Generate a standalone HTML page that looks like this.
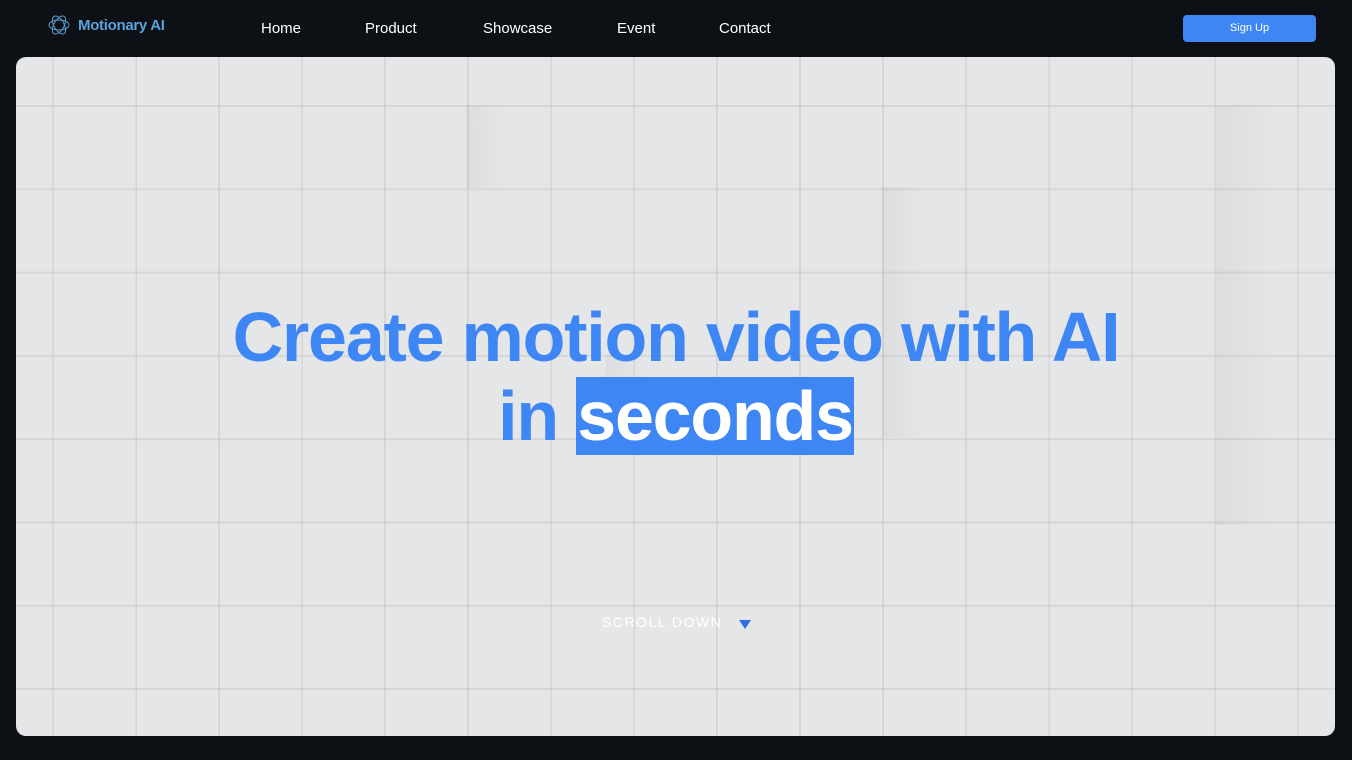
<!DOCTYPE html>
<html><head><meta charset="utf-8"><style>
*{margin:0;padding:0;box-sizing:border-box}
body{width:1352px;height:760px;background:#0d1015;font-family:"Liberation Sans",sans-serif;overflow:hidden;position:relative}
.logo{position:absolute;left:47px;top:13px;display:flex;align-items:center;gap:7px;color:#5aa3dc;font-weight:bold;font-size:15px}
nav a{position:absolute;top:20px;color:#fff;font-size:15px;text-decoration:none}
.btn{position:absolute;left:1183px;top:15px;width:133px;height:27px;background:#3f86f5;border-radius:4px;color:#fff;font-size:11px;text-align:center;line-height:27px}
.hero{position:absolute;left:16px;top:57px;width:1319px;height:679px;border-radius:10px;overflow:hidden;background:#e5e6e8;
background-image:
linear-gradient(90deg,rgba(160,160,165,.22) 2px,transparent 2px),
linear-gradient(180deg,rgba(160,160,165,.22) 2px,transparent 2px);
background-size:83px 83.3px;background-position:36px 48px}
.sh{position:absolute;background:linear-gradient(90deg,rgba(0,0,0,.04),transparent)}
h1{position:absolute;left:0;width:100%;text-align:center;color:#3f86f5;font-size:70px;font-weight:bold;letter-spacing:-1.2px;line-height:80px}
.hl{background:#3f86f5;color:#fff;padding:0 1px}
.sc{position:absolute;left:602px;top:614px;color:#fff;font-size:14px;letter-spacing:1.5px}
.tri{position:absolute;left:739px;top:620px;width:0;height:0;border-left:6px solid transparent;border-right:6px solid transparent;border-top:9px solid #2f6fe6}
</style></head><body>
<div class="logo"><svg width="24" height="24" viewBox="0 0 24 24" fill="none" stroke="#5a9fd0" stroke-width="1"><ellipse cx="12" cy="12" rx="10" ry="5"/><ellipse cx="12" cy="12" rx="10" ry="5" transform="rotate(60 12 12)"/><ellipse cx="12" cy="12" rx="10" ry="5" transform="rotate(120 12 12)"/></svg><span style="font-size:15px;letter-spacing:-0.3px">Motionary AI</span></div>
<nav><a style="left:261px">Home</a><a style="left:365px">Product</a><a style="left:483px">Showcase</a><a style="left:617px">Event</a><a style="left:719px">Contact</a></nav>
<div class="btn">Sign Up</div>
<div class="hero">
<div class="sh" style="left:450px;top:48px;width:40px;height:83px"></div>
<div class="sh" style="left:590px;top:298px;width:40px;height:83px"></div>
<div class="sh" style="left:1200px;top:48px;width:60px;height:420px"></div>
<div class="sh" style="left:866px;top:130px;width:40px;height:250px"></div>
</div>
<h1 style="top:297px">Create motion video with AI</h1>
<h1 style="top:376px">in <span class="hl">seconds</span></h1>
<div class="sc">SCROLL DOWN</div>
<div class="tri"></div>
</body></html>
